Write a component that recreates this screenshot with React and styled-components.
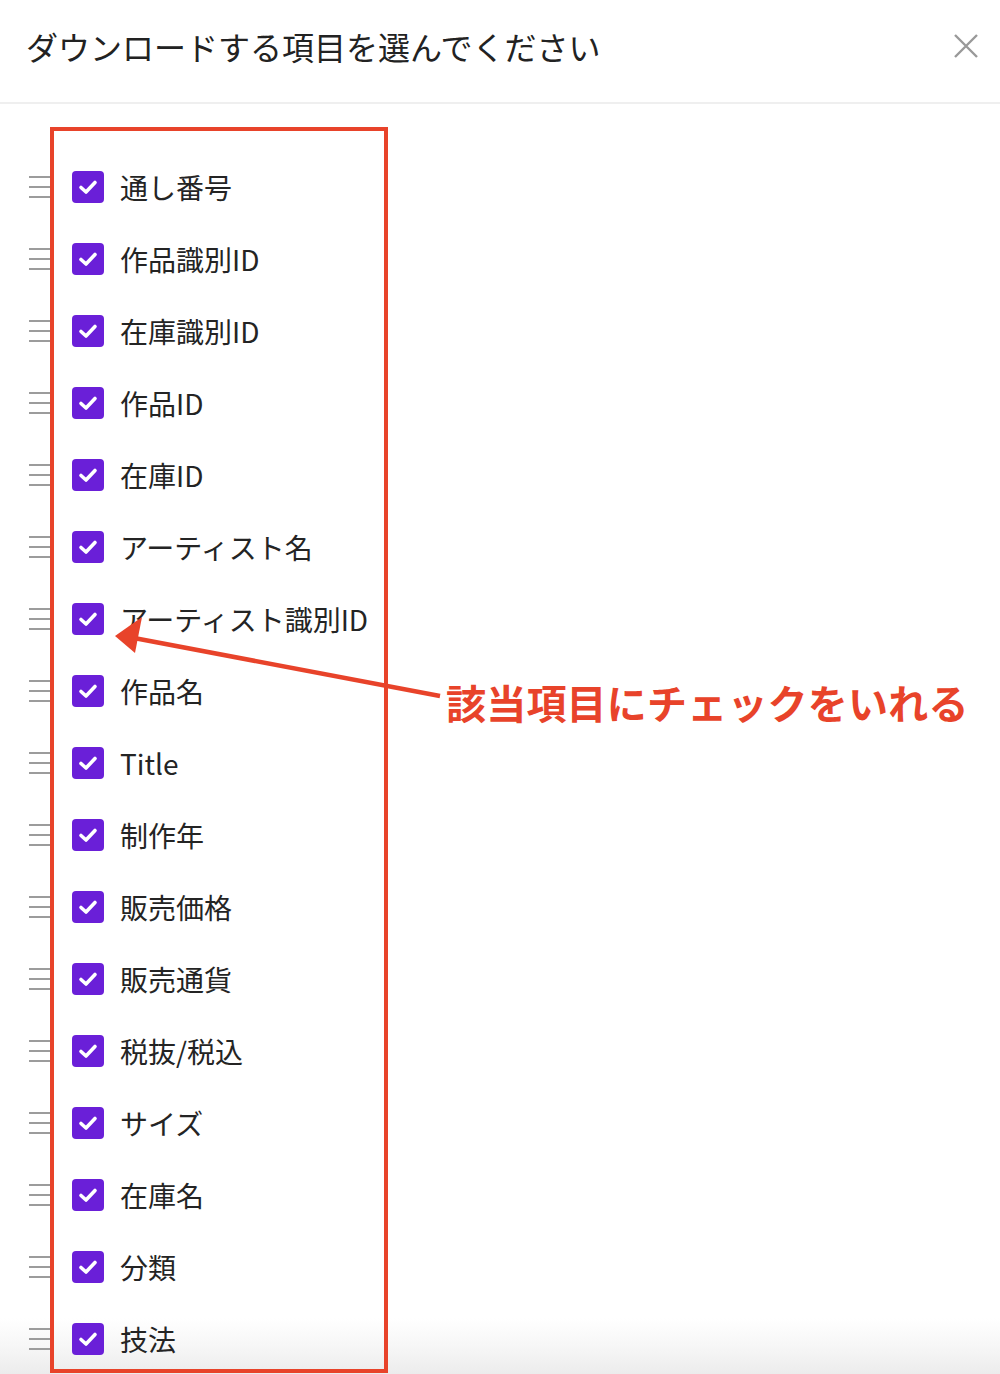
import React from "react";
import styled, { createGlobalStyle } from "styled-components";

const Global = createGlobalStyle`
  html, body { margin: 0; padding: 0; background: #fff; }
  body {
    width: 1000px; height: 1374px; overflow: hidden; position: relative;
    font-family: "Noto Sans CJK JP", "Noto Sans", sans-serif;
  }
`;

const Page = styled.div`
  position: relative;
  width: 1000px;
  height: 1374px;
  overflow: hidden;
  background: linear-gradient(to bottom, #fff 0, #fff 1318px, #f7f7f7 1345px, #ececec 1374px);
`;

const Header = styled.header`
  height: 102px;
  border-bottom: 2px solid #efefef;
  display: flex;
  align-items: center;
  justify-content: space-between;
  padding: 0 22px 0 26px;
  box-sizing: content-box;
  background: #fff;
`;

const Title = styled.h1`
  margin: 0;
  font-size: 32px;
  font-weight: 400;
  color: #222;
  line-height: 1;
  padding-bottom: 10px;
`;

const CloseButton = styled.button`
  border: none;
  background: none;
  padding: 0;
  width: 24px;
  height: 24px;
  margin-bottom: 10px;
  cursor: pointer;
  display: flex;
`;

const List = styled.ul`
  list-style: none;
  margin: 0;
  padding: 47px 0 0 29px;
`;

const Row = styled.li`
  height: 72px;
  display: flex;
  align-items: center;
`;

const Handle = styled.span`
  width: 22px;
  height: 22px;
  display: flex;
  flex-direction: column;
  justify-content: space-between;
  margin-right: 21px;
  & > i {
    display: block;
    height: 2px;
    background: #9c9c9c;
  }
`;

const Box = styled.span`
  width: 32px;
  height: 32px;
  border-radius: 4px;
  background: #6a1fd8;
  display: flex;
  align-items: center;
  justify-content: center;
  margin-right: 16px;
  flex-shrink: 0;
`;

const Label = styled.span`
  font-size: 28px;
  color: #242424;
  line-height: 1;
  white-space: nowrap;
`;

const Frame = styled.div`
  position: absolute;
  left: 50px;
  top: 127px;
  width: 338px;
  height: 1246px;
  border: 4px solid #e8432a;
  box-sizing: border-box;
  pointer-events: none;
`;

const Arrow = styled.svg`
  position: absolute;
  left: 0;
  top: 0;
  pointer-events: none;
`;

const Note = styled.div`
  position: absolute;
  left: 446px;
  top: 678px;
  font-size: 40px;
  font-weight: 700;
  letter-spacing: 0.2px;
  color: #e8432a;
  line-height: 48px;
  white-space: nowrap;
`;

const items = [
  "通し番号",
  "作品識別ID",
  "在庫識別ID",
  "作品ID",
  "在庫ID",
  "アーティスト名",
  "アーティスト識別ID",
  "作品名",
  "Title",
  "制作年",
  "販売価格",
  "販売通貨",
  "税抜/税込",
  "サイズ",
  "在庫名",
  "分類",
  "技法",
];

const Check = () => (
  <svg width="24" height="24" viewBox="0 0 24 24">
    <path d="M5 12.5 L10 17 L19 7.5" fill="none" stroke="#fff" strokeWidth="3.6" strokeLinecap="round" strokeLinejoin="round" />
  </svg>
);

export default function App() {
  return (
    <Page>
      <Global />
      <Header>
        <Title>ダウンロードする項目を選んでください</Title>
        <CloseButton aria-label="close">
          <svg width="24" height="24" viewBox="0 0 24 24">
            <path d="M1 1 L23 23 M23 1 L1 23" stroke="#999" strokeWidth="2.4" />
          </svg>
        </CloseButton>
      </Header>
      <List>
        {items.map((t) => (
          <Row key={t}>
            <Handle><i /><i /><i /></Handle>
            <Box><Check /></Box>
            <Label>{t}</Label>
          </Row>
        ))}
      </List>
      <Frame />
      <Arrow width="1000" height="1374" viewBox="0 0 1000 1374">
        <line x1="440" y1="696" x2="134" y2="638" stroke="#e8432a" strokeWidth="4.5" />
        <polygon points="115,636 142,617 135,653" fill="#e8432a" />
      </Arrow>
      <Note>該当項目にチェックをいれる</Note>
    </Page>
  );
}
